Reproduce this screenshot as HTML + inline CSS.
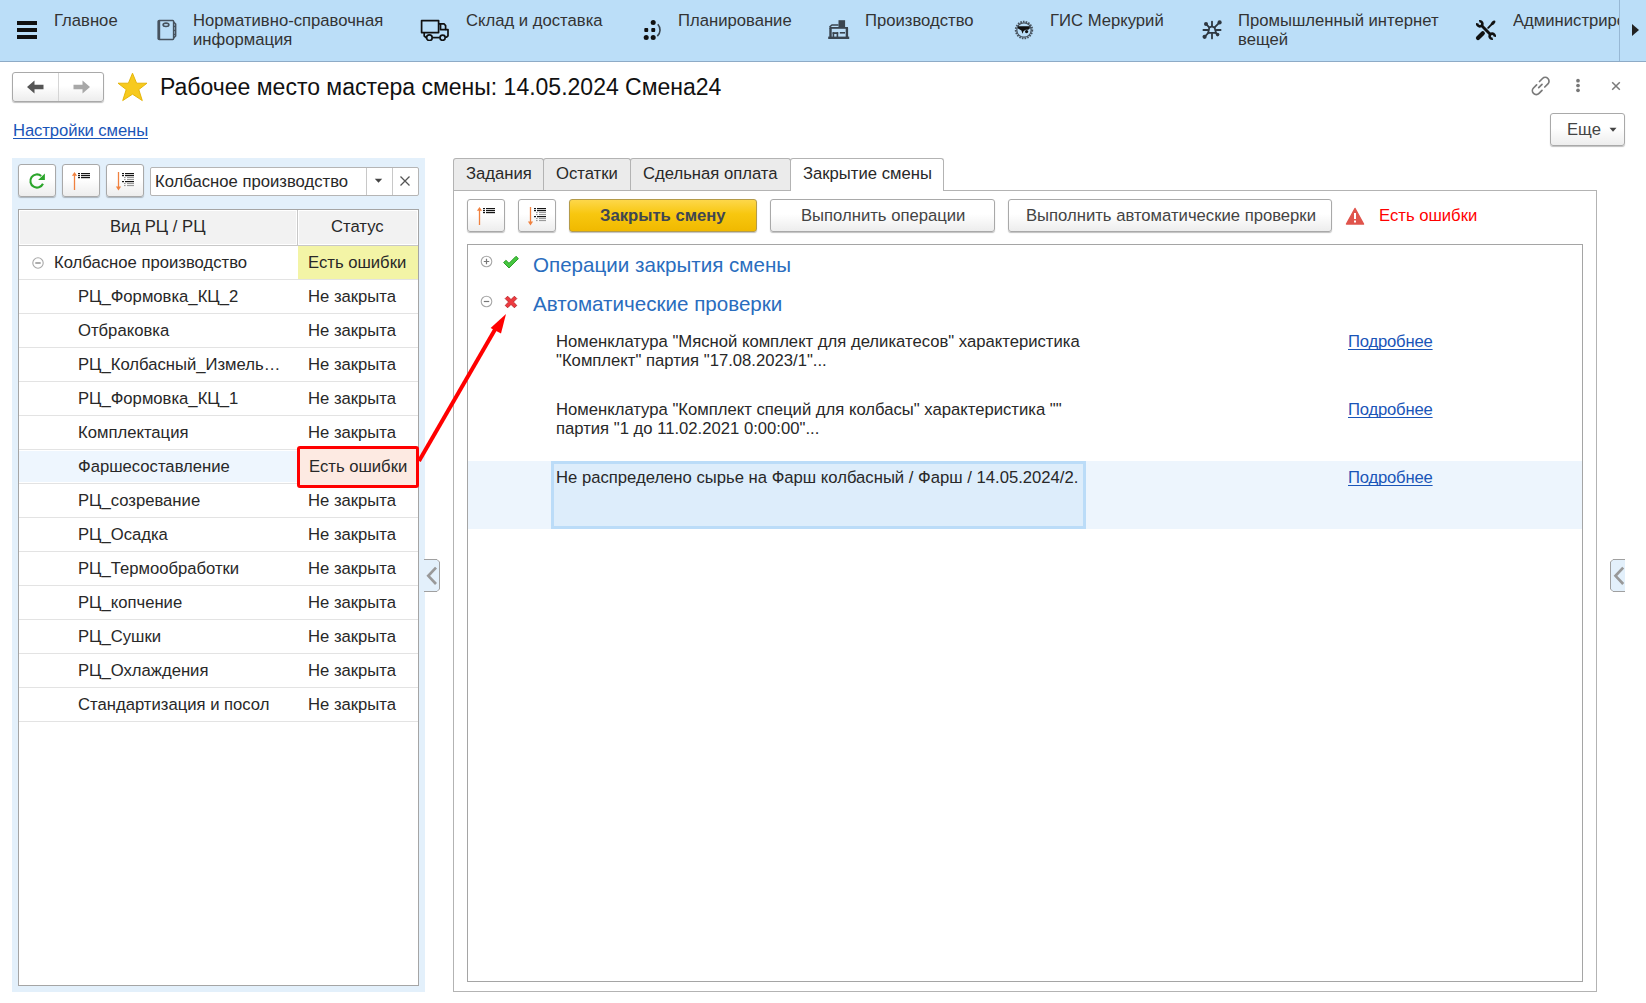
<!DOCTYPE html>
<html><head><meta charset="utf-8">
<style>
*{box-sizing:border-box;margin:0;padding:0}
html,body{width:1646px;height:1003px;overflow:hidden;background:#fff}
body{position:relative;font-family:"Liberation Sans",sans-serif;font-size:16.67px;line-height:19px;color:#282828}
.a{position:absolute}
.t{position:absolute;white-space:nowrap;line-height:19px}
#top{left:0;top:0;width:1646px;height:62px;background:#BBDEF8;border-bottom:1px solid #8EABC6}
.tb{color:#333}
.btn{position:absolute;border:1px solid #A9A9A9;border-radius:3px;background:linear-gradient(#fff 0%,#fff 45%,#EDEDED 100%);box-shadow:0 1px 1px rgba(0,0,0,.25)}
.row{position:absolute;left:19px;width:399px;height:34px;border-bottom:1px solid #E3E3E3}
.rt{position:absolute;white-space:nowrap;line-height:19px;top:7px}
.link{color:#1A55B8;text-decoration:underline;text-decoration-skip-ink:none;text-underline-offset:1.8px}
</style></head><body>

<!-- TOP BAR -->
<div id="top" class="a"></div>
<div class="a" style="left:1619px;top:0;width:1px;height:61px;background:#97B8D5"></div>
<svg class="a" style="left:1630px;top:22px" width="12" height="16"><path d="M2 2 L9 8 L2 14 Z" fill="#222"/></svg>

<div class="a" style="left:17px;top:21px;width:20px;height:4px;background:#111"></div>
<div class="a" style="left:17px;top:28px;width:20px;height:4px;background:#111"></div>
<div class="a" style="left:17px;top:35px;width:20px;height:4px;background:#111"></div>
<div class="t tb" style="left:54px;top:11px">Главное</div>

<div class="t tb" style="left:193px;top:11px">Нормативно-справочная<br>информация</div>
<div class="t tb" style="left:466px;top:11px">Склад и доставка</div>
<div class="t tb" style="left:678px;top:11px">Планирование</div>
<div class="t tb" style="left:865px;top:11px">Производство</div>
<div class="t tb" style="left:1050px;top:11px">ГИС Меркурий</div>
<div class="t tb" style="left:1238px;top:11px">Промышленный интернет<br>вещей</div>
<div class="a" style="left:1513px;top:0;width:106px;height:61px;overflow:hidden"><div class="t tb" style="left:0;top:11px">Администрирование</div></div>


<!-- TOPBAR ICONS -->
<svg class="a" style="left:156px;top:19px" width="22" height="22"><g fill="none" stroke="#46525E"><rect x="2.4" y="1.6" width="15.2" height="18.8" rx="0.8" stroke-width="1.5"/><ellipse cx="10" cy="5.8" rx="2.9" ry="1.7" stroke-width="1.6"/><path d="M17.6 3.2 L19.6 5 V17 L17.6 19" stroke-width="1.6"/></g><rect x="1.6" y="1.6" width="2.6" height="18.8" fill="#46525E"/><g fill="#46525E"><rect x="17.4" y="6.8" width="2.4" height="1.3"/><rect x="17.4" y="10.8" width="2.4" height="1.3"/><rect x="17.4" y="14.8" width="2.4" height="1.3"/></g></svg>
<svg class="a" style="left:420px;top:19px" width="32" height="22"><g fill="none" stroke="#111" stroke-width="1.7" stroke-linejoin="round"><rect x="1.6" y="1.6" width="17" height="12"/><path d="M18.6 4.8 H24 L25.6 6.6 V10.6 H20.5 V4.8"/><path d="M25.6 10.6 H28 V16.8 L26.6 18.2 H25.6"/><path d="M4.2 13.6 V17 L6.4 18.8"/><path d="M12.4 18.6 H19.8"/><circle cx="9.4" cy="18.7" r="2.8"/><circle cx="22.6" cy="18.7" r="2.6"/></g></svg>
<svg class="a" style="left:642px;top:19px" width="22" height="22"><g fill="#111"><circle cx="11.2" cy="3.4" r="2.5"/><rect x="2.3" y="9.1" width="3.9" height="3.9" rx="0.9"/><rect x="9.3" y="9.1" width="3.9" height="3.9" rx="0.9"/><circle cx="4.2" cy="18.6" r="2.5"/><circle cx="11.2" cy="18.6" r="2.5"/></g><path d="M15.8 5.2 A8.5 8.5 0 0 1 15.3 17.2" fill="none" stroke="#38434D" stroke-width="1.6"/></svg>
<svg class="a" style="left:828px;top:19px" width="22" height="22"><g fill="#3A4550"><rect x="10.5" y="1.2" width="6.6" height="7.5"/><path d="M1.5 8 H20 V9.8 H1.5 Z"/><rect x="1.3" y="9" width="2.4" height="10.4"/><rect x="17.7" y="9" width="2.4" height="10.4"/><rect x="0.2" y="17.6" width="21" height="2.4"/><rect x="4.6" y="13.2" width="5.6" height="1.8"/><rect x="4.6" y="13.2" width="1.6" height="5"/><rect x="8.6" y="13.2" width="1.6" height="5"/><rect x="11.8" y="13" width="5.2" height="1.6"/></g><path d="M1.5 8 L4 6 H10.5" fill="none" stroke="#3A4550" stroke-width="1.6"/></svg>
<svg class="a" style="left:1013px;top:19px" width="22" height="22"><circle cx="11" cy="11" r="8.3" fill="none" stroke="#46525E" stroke-width="1.8" stroke-dasharray="1.6 1.1"/><circle cx="11" cy="11" r="7.2" fill="none" stroke="#46525E" stroke-width="1.2"/><path d="M5 7.3 H16.8 V9.6 L15.2 10.8 H12.8 L10.6 12 L9.6 14.8 L8.4 11.6 L5 9.4 Z" fill="#111"/><circle cx="13.6" cy="12.6" r="1.6" fill="#111"/></svg>
<svg class="a" style="left:1201px;top:19px" width="22" height="22"><g stroke="#2E3740" stroke-width="1.8" stroke-linecap="round" fill="none"><path d="M11 2.6 V7.2"/><path d="M11 14.6 V19.4"/><path d="M2.4 11 H6.6"/><path d="M15.4 11 H19.6"/><path d="M8.2 8.3 L5.2 5.2"/><path d="M13.6 8.4 L18.6 3.4"/><path d="M7.6 13.6 L3.8 17.6"/><path d="M14.6 13.6 L16.4 15.5"/><path d="M7.2 13.8 L8.4 8.4 L11 7.4 L13.6 8.6 L15 13.8 Z"/></g><g fill="#2E3740"><circle cx="5" cy="5" r="2"/><circle cx="18.6" cy="3.4" r="2.1"/><circle cx="3.6" cy="17.8" r="2.1"/><circle cx="16.6" cy="15.6" r="1.8"/></g></svg>
<svg class="a" style="left:1475px;top:19px" width="22" height="22"><g fill="none" stroke="#111" stroke-linecap="round"><path d="M6.8 6.8 L15.2 15.2" stroke-width="2.9"/><path d="M4.22 2.27 A2.6 2.6 0 1 1 2.27 4.22" stroke-width="2.6" stroke-linecap="butt"/><path d="M17.78 19.73 A2.6 2.6 0 1 1 19.73 17.78" stroke-width="2.6" stroke-linecap="butt"/><path d="M3 19 L7.8 14.2" stroke-width="4.2"/><path d="M13.2 8.8 L16.6 5.4" stroke-width="1.9"/></g><ellipse cx="18.1" cy="3.9" rx="2.9" ry="1.6" transform="rotate(-45 18.1 3.9)" fill="#111"/></svg>

<!-- HEADER -->
<div class="btn" style="left:12px;top:72px;width:92px;height:30px"></div>
<div class="a" style="left:58px;top:73px;width:1px;height:28px;background:#D5D5D5"></div>
<div class="t" style="left:160px;top:73px;font-size:23px;line-height:28px;color:#111">Рабочее место мастера смены: 14.05.2024 Смена24</div>

<div class="t link" style="left:13px;top:121px;letter-spacing:-0.1px">Настройки смены</div>
<div class="btn" style="left:1550px;top:113px;width:75px;height:33px"></div>
<div class="t" style="left:1567px;top:120px;color:#444">Еще</div>

<!-- LEFT PANEL -->
<div class="a" style="left:12px;top:158px;width:413px;height:834px;background:#E3F0FB"></div>
<div class="btn" style="left:18px;top:164px;width:38px;height:33px"></div>
<div class="btn" style="left:62px;top:164px;width:38px;height:33px"></div>
<div class="btn" style="left:106px;top:164px;width:38px;height:33px"></div>
<div class="a" style="left:150px;top:167px;width:269px;height:29px;background:#fff;border:1px solid #B5B5B5;border-radius:2px"></div>
<div class="t" style="left:155px;top:172px">Колбасное производство</div>

<div class="a" style="left:18px;top:209px;width:401px;height:777px;background:#fff;border:1px solid #A5A5A5"></div>
<div class="a" style="left:19px;top:210px;width:278px;height:35px;border:1px solid #fff;background:#F2F2F2"></div>
<div class="a" style="left:297px;top:210px;width:1px;height:35px;background:#C8C8C8"></div>
<div class="a" style="left:298px;top:210px;width:120px;height:35px;border:1px solid #fff;background:#F2F2F2"></div>
<div class="a" style="left:19px;top:245px;width:399px;height:1px;background:#C8C8C8"></div>
<div class="t" style="left:110px;top:217px">Вид РЦ / РЦ</div>
<div class="t" style="left:331px;top:217px">Статус</div>
<div class="row" style="top:246px;">
<div class="a" style="left:279px;top:0;width:120px;height:33px;background:#F3F4A6"></div>
<svg class="a" style="left:13px;top:11px" width="12" height="12"><circle cx="6" cy="6" r="5.2" fill="none" stroke="#A8A8A8" stroke-width="1.1"/><path d="M3.3 6H8.7" stroke="#777" stroke-width="1.2"/></svg>
<div class="rt" style="left:35px">Колбасное производство</div>
<div class="rt" style="left:289px">Есть ошибки</div>
</div>
<div class="row" style="top:280px;">
<div class="rt" style="left:59px">РЦ_Формовка_КЦ_2</div>
<div class="rt" style="left:289px">Не закрыта</div>
</div>
<div class="row" style="top:314px;">
<div class="rt" style="left:59px">Отбраковка</div>
<div class="rt" style="left:289px">Не закрыта</div>
</div>
<div class="row" style="top:348px;">
<div class="rt" style="left:59px">РЦ_Колбасный_Измель…</div>
<div class="rt" style="left:289px">Не закрыта</div>
</div>
<div class="row" style="top:382px;">
<div class="rt" style="left:59px">РЦ_Формовка_КЦ_1</div>
<div class="rt" style="left:289px">Не закрыта</div>
</div>
<div class="row" style="top:416px;">
<div class="rt" style="left:59px">Комплектация</div>
<div class="rt" style="left:289px">Не закрыта</div>
</div>
<div class="row" style="top:450px;"><div class="a" style="left:0;top:1px;width:399px;height:31px;background:#EEF6FE"></div>
<div class="rt" style="left:59px">Фаршесоставление</div>
<div class="a" style="left:279px;top:0;width:120px;height:33px;background:#FDEAE2"></div>
<div class="rt" style="left:289px">Есть ошибки</div>
</div>
<div class="row" style="top:484px;">
<div class="rt" style="left:59px">РЦ_созревание</div>
<div class="rt" style="left:289px">Не закрыта</div>
</div>
<div class="row" style="top:518px;">
<div class="rt" style="left:59px">РЦ_Осадка</div>
<div class="rt" style="left:289px">Не закрыта</div>
</div>
<div class="row" style="top:552px;">
<div class="rt" style="left:59px">РЦ_Термообработки</div>
<div class="rt" style="left:289px">Не закрыта</div>
</div>
<div class="row" style="top:586px;">
<div class="rt" style="left:59px">РЦ_копчение</div>
<div class="rt" style="left:289px">Не закрыта</div>
</div>
<div class="row" style="top:620px;">
<div class="rt" style="left:59px">РЦ_Сушки</div>
<div class="rt" style="left:289px">Не закрыта</div>
</div>
<div class="row" style="top:654px;">
<div class="rt" style="left:59px">РЦ_Охлаждения</div>
<div class="rt" style="left:289px">Не закрыта</div>
</div>
<div class="row" style="top:688px;">
<div class="rt" style="left:59px">Стандартизация и посол</div>
<div class="rt" style="left:289px">Не закрыта</div>
</div>

<!-- RIGHT PANEL -->
<div class="a" style="left:453px;top:190px;width:1144px;height:802px;border:1px solid #B3B3B3"></div>
<div class="a" style="left:467px;top:244px;width:1116px;height:738px;border:1px solid #A5A5A5"></div>


<!-- TABS -->
<div class="a" style="left:453px;top:158px;width:91px;height:32px;background:#EBEBEB;border:1px solid #B3B3B3;border-bottom:none;border-radius:3px 3px 0 0"></div>
<div class="a" style="left:543px;top:158px;width:88px;height:32px;background:#EBEBEB;border:1px solid #B3B3B3;border-bottom:none;border-radius:3px 3px 0 0"></div>
<div class="a" style="left:630px;top:158px;width:161px;height:32px;background:#EBEBEB;border:1px solid #B3B3B3;border-bottom:none;border-radius:3px 3px 0 0"></div>
<div class="a" style="left:790px;top:158px;width:154px;height:33px;background:#fff;border:1px solid #B3B3B3;border-bottom:none;border-radius:3px 3px 0 0"></div>
<div class="t" style="left:466px;top:164px">Задания</div>
<div class="t" style="left:556px;top:164px">Остатки</div>
<div class="t" style="left:643px;top:164px">Сдельная оплата</div>
<div class="t" style="left:803px;top:164px">Закрытие смены</div>

<!-- TOOLBAR -->
<div class="btn" style="left:467px;top:199px;width:38px;height:33px"></div>
<div class="btn" style="left:518px;top:199px;width:38px;height:33px"></div>
<div class="btn" style="left:569px;top:199px;width:188px;height:33px;border-color:#B49B4A;background:linear-gradient(#FDD74A 0%,#F8C70F 45%,#F0B900 100%)"></div>
<div class="t" style="left:600px;top:206px;font-weight:bold;color:#404652">Закрыть смену</div>
<div class="btn" style="left:770px;top:199px;width:225px;height:33px"></div>
<div class="t" style="left:801px;top:206px;color:#444">Выполнить операции</div>
<div class="btn" style="left:1008px;top:199px;width:324px;height:33px"></div>
<div class="t" style="left:1026px;top:206px;color:#444">Выполнить автоматические проверки</div>
<svg class="a" style="left:1345px;top:207px" width="20" height="19"><path d="M10 1.5 L18.5 17 L1.5 17 Z" fill="#E0544C" stroke="#E0544C" stroke-width="1.5" stroke-linejoin="round"/><rect x="9" y="6" width="2" height="6" fill="#fff"/><rect x="9" y="13.5" width="2" height="2" fill="#fff"/></svg>
<div class="t" style="left:1379px;top:206px;color:#F00">Есть ошибки</div>

<!-- CONTENT -->
<svg class="a" style="left:480px;top:255px" width="13" height="13"><circle cx="6.5" cy="6.5" r="5.3" fill="none" stroke="#A8A8A8" stroke-width="1.1"/><path d="M3.8 6.5H9.2M6.5 3.8V9.2" stroke="#777" stroke-width="1.2"/></svg>
<svg class="a" style="left:480px;top:295px" width="13" height="13"><circle cx="6.5" cy="6.5" r="5.3" fill="none" stroke="#A8A8A8" stroke-width="1.1"/><path d="M3.8 6.5H9.2" stroke="#777" stroke-width="1.2"/></svg>
<div class="t" style="left:533px;top:253px;font-size:20.6px;line-height:24px;color:#2A6DBE">Операции закрытия смены</div>
<div class="t" style="left:533px;top:292px;font-size:20.6px;line-height:24px;color:#2A6DBE">Автоматические проверки</div>

<div class="a" style="left:468px;top:461px;width:1114px;height:68px;background:#EDF5FD"></div>
<div class="a" style="left:551px;top:461px;width:535px;height:68px;background:#DDEDFB;border:3px solid #BBDCF8"></div>
<div class="t" style="left:556px;top:332px">Номенклатура "Мясной комплект для деликатесов" характеристика<br>"Комплект" партия "17.08.2023/1"...</div>
<div class="t" style="left:556px;top:400px">Номенклатура "Комплект специй для колбасы" характеристика ""<br>партия "1 до 11.02.2021 0:00:00"...</div>
<div class="t" style="left:556px;top:468px">Не распределено сырье на Фарш колбасный / Фарш / 14.05.2024/2.</div>
<div class="t link" style="left:1348px;top:332px;letter-spacing:-0.2px">Подробнее</div>
<div class="t link" style="left:1348px;top:400px;letter-spacing:-0.2px">Подробнее</div>
<div class="t link" style="left:1348px;top:468px;letter-spacing:-0.2px">Подробнее</div>


<!-- ICONS -->
<!-- nav arrows -->
<svg class="a" style="left:26px;top:79px" width="20" height="16"><path d="M1 8 L8.5 1.5 V5.8 H17.5 V10.2 H8.5 V14.5 Z" fill="#555"/></svg>
<svg class="a" style="left:71px;top:79px" width="20" height="16"><path d="M19 8 L11.5 1.5 V5.8 H2.5 V10.2 H11.5 V14.5 Z" fill="#A8A8A8"/></svg>
<!-- star -->
<svg class="a" style="left:117px;top:72px" width="31" height="30"><path d="M15.5 1.2 L19.6 11.2 L30 11.2 L21.8 17.6 L25.3 28.6 L15.5 22.2 L5.7 28.6 L9.2 17.6 L1 11.2 L11.4 11.2 Z" fill="#F7CA1E" stroke="#E2B100" stroke-width="0.9" stroke-linejoin="miter"/></svg>
<!-- link, dots, close -->
<svg class="a" style="left:1530px;top:75px" width="22" height="22"><g fill="none" stroke="#7A7A7A" stroke-width="1.7" stroke-linecap="round"><path d="M9.5 6.5 L12.5 3.5 A3.6 3.6 0 0 1 17.9 8.9 L14.8 12"/><path d="M12 9.3 L8.7 12.6"/><path d="M12 15.3 L9 18.4 A3.6 3.6 0 0 1 3.5 13 L6.6 9.9"/></g></svg>
<svg class="a" style="left:1574px;top:77px" width="8" height="17"><circle cx="4" cy="3.7" r="1.85" fill="#777"/><circle cx="4" cy="8.5" r="1.85" fill="#777"/><circle cx="4" cy="13.3" r="1.85" fill="#777"/></svg>
<svg class="a" style="left:1610px;top:80px" width="12" height="12"><path d="M2.2 2.2 L9.8 9.8 M9.8 2.2 L2.2 9.8" stroke="#7A7A7A" stroke-width="1.5"/></svg>
<!-- Еще arrow -->
<svg class="a" style="left:1609px;top:127px" width="9" height="6"><path d="M0.5 0.8 H7.5 L4 4.8 Z" fill="#444"/></svg>
<!-- field dropdown / clear -->
<div class="a" style="left:366px;top:168px;width:1px;height:27px;background:#C8C8C8"></div>
<div class="a" style="left:392px;top:168px;width:1px;height:27px;background:#C8C8C8"></div>
<svg class="a" style="left:374px;top:178px" width="10" height="6"><path d="M0.8 0.8 H8.2 L4.5 4.8 Z" fill="#444"/></svg>
<svg class="a" style="left:399px;top:175px" width="12" height="12"><path d="M1.5 1.5 L10.5 10.5 M10.5 1.5 L1.5 10.5" stroke="#555" stroke-width="1.3"/></svg>
<!-- refresh -->
<svg class="a" style="left:27px;top:171px" width="20" height="20"><path d="M15.98 12.79 A6.6 6.6 0 1 1 14.24 4.94" fill="none" stroke="#2BA52B" stroke-width="2.1"/><path d="M17.9 2.4 V9.1 H11.1 Z" fill="#2BA52B"/></svg>

<svg class="a" style="left:70px;top:171px" width="22" height="22"><path d="M4.5 3.5 V19" stroke="#F0813F" stroke-width="1.3"/><path d="M1.9 4.8 L4.5 1 L7.1 4.8 Z" fill="#F0813F"/><g fill="#151515"><rect x="8" y="2" width="2" height="1.2"/><rect x="8" y="4" width="2" height="1.2"/><rect x="8" y="6" width="2" height="1.2"/><rect x="11" y="2" width="9" height="1.2"/><rect x="11" y="4" width="9" height="1.2"/><rect x="11" y="6" width="9" height="1.2"/></g></svg><svg class="a" style="left:114px;top:171px" width="22" height="22"><path d="M4.5 1 V16.5" stroke="#F0813F" stroke-width="1.3"/><path d="M1.9 15.4 L4.5 19.4 L7.1 15.4 Z" fill="#F0813F"/><g fill="#151515"><rect x="8" y="2" width="2" height="1.2"/><rect x="8" y="4" width="2" height="1.2"/><rect x="8" y="10" width="2" height="1.2"/><rect x="11" y="2" width="9" height="1.2"/><rect x="11" y="4" width="9" height="1.2"/><rect x="11" y="10" width="9" height="1.2"/></g><g fill="#9A9A9A"><rect x="10" y="6" width="1.6" height="1.1"/><rect x="10" y="8" width="1.6" height="1.1"/><rect x="10" y="12" width="1.6" height="1.1"/><rect x="10" y="14" width="1.6" height="1.1"/><rect x="13" y="6" width="7" height="1.1"/><rect x="13" y="8" width="7" height="1.1"/><rect x="13" y="12" width="7" height="1.1"/><rect x="13" y="14" width="7" height="1.1"/></g></svg><svg class="a" style="left:475px;top:206px" width="22" height="22"><path d="M4.5 3.5 V19" stroke="#F0813F" stroke-width="1.3"/><path d="M1.9 4.8 L4.5 1 L7.1 4.8 Z" fill="#F0813F"/><g fill="#151515"><rect x="8" y="2" width="2" height="1.2"/><rect x="8" y="4" width="2" height="1.2"/><rect x="8" y="6" width="2" height="1.2"/><rect x="11" y="2" width="9" height="1.2"/><rect x="11" y="4" width="9" height="1.2"/><rect x="11" y="6" width="9" height="1.2"/></g></svg><svg class="a" style="left:526px;top:206px" width="22" height="22"><path d="M4.5 1 V16.5" stroke="#F0813F" stroke-width="1.3"/><path d="M1.9 15.4 L4.5 19.4 L7.1 15.4 Z" fill="#F0813F"/><g fill="#151515"><rect x="8" y="2" width="2" height="1.2"/><rect x="8" y="4" width="2" height="1.2"/><rect x="8" y="10" width="2" height="1.2"/><rect x="11" y="2" width="9" height="1.2"/><rect x="11" y="4" width="9" height="1.2"/><rect x="11" y="10" width="9" height="1.2"/></g><g fill="#9A9A9A"><rect x="10" y="6" width="1.6" height="1.1"/><rect x="10" y="8" width="1.6" height="1.1"/><rect x="10" y="12" width="1.6" height="1.1"/><rect x="10" y="14" width="1.6" height="1.1"/><rect x="13" y="6" width="7" height="1.1"/><rect x="13" y="8" width="7" height="1.1"/><rect x="13" y="12" width="7" height="1.1"/><rect x="13" y="14" width="7" height="1.1"/></g></svg>
<!-- check & cross -->
<svg class="a" style="left:502px;top:255px" width="18" height="15"><path d="M1.6 7.6 L3.9 5.3 L7 8.3 L14 1.3 L16.4 3.6 L7 13 Z" fill="#46C73F" stroke="#2E9E2A" stroke-width="1" stroke-linejoin="round"/></svg>
<svg class="a" style="left:504px;top:295px" width="14" height="14"><path d="M1.2 3.6 L3.6 1.2 L7 4.6 L10.4 1.2 L12.8 3.6 L9.4 7 L12.8 10.4 L10.4 12.8 L7 9.4 L3.6 12.8 L1.2 10.4 L4.6 7 Z" fill="#EE3A3F" stroke="#B8272B" stroke-width="0.9" stroke-linejoin="round"/></svg>
<!-- splitter tabs -->
<svg class="a" style="left:424px;top:558px" width="17" height="35"><path d="M0 1.5 H13 L15.5 4 V31 L13 33.5 H0" fill="#E3F0FB" stroke="#A0A0A0" stroke-width="1"/><path d="M12 9.6 L4.3 17.8 L12 26" fill="none" stroke="#999" stroke-width="2.7"/></svg>
<svg class="a" style="left:1609px;top:558px" width="16" height="35"><path d="M17 1.5 H4 L1.5 4 V31 L4 33.5 H17" fill="#E3F0FB" stroke="#A0A0A0" stroke-width="1"/><path d="M14.2 9.6 L6.5 17.8 L14.2 26" fill="none" stroke="#999" stroke-width="2.7"/></svg>
<!-- red callout -->
<div class="a" style="left:297px;top:446px;width:122px;height:42px;background:#FDEAE2;border:3.5px solid #F00;border-radius:3px"></div><div class="t" style="left:309px;top:457px">Есть ошибки</div>
<svg class="a" style="left:400px;top:300px" width="120" height="180"><path d="M19 161 L96.5 27" stroke="#F00" stroke-width="4"/><path d="M106 14 L90.6 28 L101 33.4 Z" fill="#F00"/></svg>

</body></html>
